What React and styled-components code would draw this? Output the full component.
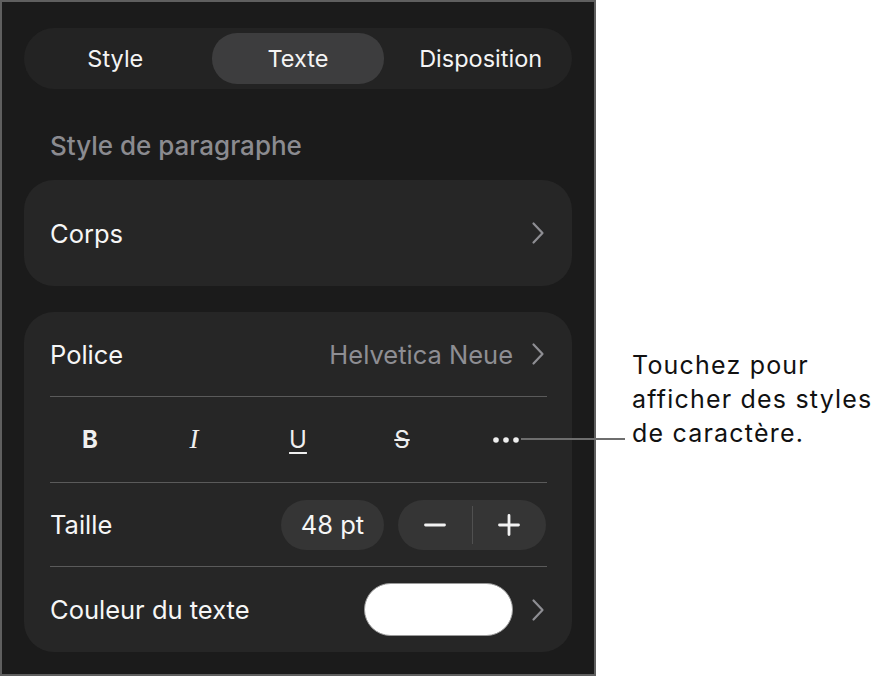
import React from "react";
import styled, { createGlobalStyle } from "styled-components";

const GlobalStyle = createGlobalStyle`
  html, body {
    margin: 0;
    padding: 0;
    background: #ffffff;
  }
  body {
    font-family: Inter, "Noto Sans", "Liberation Sans", sans-serif;
    -webkit-font-smoothing: antialiased;
  }
`;

// layout
const Page = styled.div`
  display: flex;
  align-items: flex-start;
  width: 883px;
  height: 678px;
`;
const Panel = styled.main`
  box-sizing: border-box;
  width: 596px;
  height: 676px;
  padding: 26px 22px 0;
  background: #1b1b1b;
  border: 2px solid #5f5f5f;
  display: flex;
  flex-direction: column;
`;

// tabs
const Segmented = styled.nav`
  display: grid;
  grid-template-columns: repeat(3, 1fr);
  gap: 10px;
  height: 61px;
  box-sizing: border-box;
  padding: 5px;
  border-radius: 31px;
  background: #232323;
`;
const Tab = styled.div`
  display: flex;
  align-items: center;
  justify-content: center;
  border-radius: 25px;
  font-size: 23.5px;
  font-weight: 400;
  color: #f4f4f4;
  background: ${(p) => (p.$active ? "#3d3d3e" : "transparent")};
`;

const SectionLabel = styled.h2`
  margin: 41px 0 0 26px;
  font-size: 26px;
  line-height: 32px;
  font-weight: 500;
  color: #8b8b90;
`;

const Card = styled.section`
  margin-top: ${(p) => p.$top}px;
  border-radius: 30px;
  background: #262626;
  display: flex;
  flex-direction: column;
`;
const Row = styled.div`
  height: ${(p) => p.$h || 84}px;
  display: flex;
  align-items: center;
  padding: 0 27px 0 26px;
`;
const Divider = styled.hr`
  margin: 0 25px 0 26px;
  border: none;
  height: 1px;
  background: #5a5a5a;
`;
const Label = styled.span`
  flex: 1;
  font-size: 25.5px;
  color: #f6f6f6;
`;
const Value = styled.span`
  font-size: 25.5px;
  color: #8e8e93;
  margin-right: 18px;
`;

// format buttons
const FormatRow = styled.div`
  height: 85px;
  display: grid;
  grid-template-columns: repeat(5, 1fr);
  align-items: center;
  padding: 0 14px 0 14px;
  color: #efefef;
`;
const FormatButton = styled.span`
  display: flex;
  justify-content: center;
  align-items: center;
  font-size: ${(p) => (p.$serif ? 27 : 24)}px;
  line-height: 1;
  font-weight: ${(p) => (p.$bold ? 700 : 400)};
  font-style: ${(p) => (p.$italic ? "italic" : "normal")};
  font-family: ${(p) =>
    p.$serif ? '"Liberation Serif", "DejaVu Serif", serif' : "inherit"};
  text-decoration: ${(p) => p.$deco || "none"};
  text-decoration-thickness: 2px;
  text-underline-offset: 4px;
`;

// size controls
const Pill = styled.div`
  display: flex;
  align-items: center;
  justify-content: center;
  height: 50px;
  border-radius: 25px;
  background: #353535;
  color: #f6f6f6;
  font-size: 25.5px;
`;
const SizePill = styled(Pill)`
  width: 103px;
`;
const Stepper = styled(Pill)`
  width: 148px;
  margin-left: 14px;
  margin-right: -1px;
`;
const StepHalf = styled.div`
  flex: 1;
  height: 100%;
  display: flex;
  align-items: center;
  justify-content: center;
`;
const StepSep = styled.div`
  width: 1px;
  height: 38px;
  background: #505050;
`;

const Swatch = styled.div`
  box-sizing: border-box;
  width: 149px;
  height: 53px;
  border-radius: 27px;
  background: #ffffff;
  border: 1.5px solid #9a9a9a;
  margin-right: 18px;
`;

// callout
const Callout = styled.aside`
  position: relative;
  margin: 348px 0 0 36px;
  font-family: Inter, "Liberation Sans", sans-serif;
  font-size: 25px;
  letter-spacing: 1.2px;
  line-height: 34px;
  color: #111111;
`;
const Leader = styled.div`
  position: absolute;
  left: -111px;
  top: 90px;
  width: 104px;
  height: 2px;
  background: #6e6e6e;
`;

const Chevron = () => (
  <svg width="14" height="24" viewBox="0 0 14 24" fill="none">
    <path
      d="M2.5 2.5 L11.5 12 L2.5 21.5"
      stroke="#8e8e93"
      strokeWidth="2.2"
      strokeLinecap="round"
      strokeLinejoin="round"
    />
  </svg>
);

const Dots = () => (
  <svg width="26" height="6" viewBox="0 0 26 6">
    <circle cx="3" cy="3" r="2.8" fill="#efefef" />
    <circle cx="13" cy="3" r="2.8" fill="#efefef" />
    <circle cx="23" cy="3" r="2.8" fill="#efefef" />
  </svg>
);

const Minus = () => (
  <svg width="22" height="22" viewBox="0 0 22 22">
    <path d="M1.5 11 H20.5" stroke="#f2f2f2" strokeWidth="2.8" strokeLinecap="round" />
  </svg>
);
const Plus = () => (
  <svg width="22" height="22" viewBox="0 0 22 22">
    <path
      d="M1.5 11 H20.5 M11 1.5 V20.5"
      stroke="#f2f2f2"
      strokeWidth="2.8"
      strokeLinecap="round"
    />
  </svg>
);

const App = () => (
  <>
    <GlobalStyle />
    <Page>
      <Panel>
        <Segmented>
          <Tab>Style</Tab>
          <Tab $active>Texte</Tab>
          <Tab>Disposition</Tab>
        </Segmented>

        <SectionLabel>Style de paragraphe</SectionLabel>

        <Card $top={18}>
          <Row $h={106}>
            <Label>Corps</Label>
            <Chevron />
          </Row>
        </Card>

        <Card $top={26}>
          <Row>
            <Label>Police</Label>
            <Value>Helvetica Neue</Value>
            <Chevron />
          </Row>
          <Divider />
          <FormatRow>
            <FormatButton $bold>B</FormatButton>
            <FormatButton $italic $serif>
              I
            </FormatButton>
            <FormatButton $deco="underline">U</FormatButton>
            <FormatButton $deco="line-through">S</FormatButton>
            <FormatButton>
              <Dots />
            </FormatButton>
          </FormatRow>
          <Divider />
          <Row $h={83}>
            <Label>Taille</Label>
            <SizePill>48 pt</SizePill>
            <Stepper>
              <StepHalf>
                <Minus />
              </StepHalf>
              <StepSep />
              <StepHalf>
                <Plus />
              </StepHalf>
            </Stepper>
          </Row>
          <Divider />
          <Row $h={85}>
            <Label>Couleur du texte</Label>
            <Swatch />
            <Chevron />
          </Row>
        </Card>
      </Panel>

      <Callout>
        <Leader />
        Touchez pour
        <br />
        afficher des styles
        <br />
        de caractère.
      </Callout>
    </Page>
  </>
);

export default App;
